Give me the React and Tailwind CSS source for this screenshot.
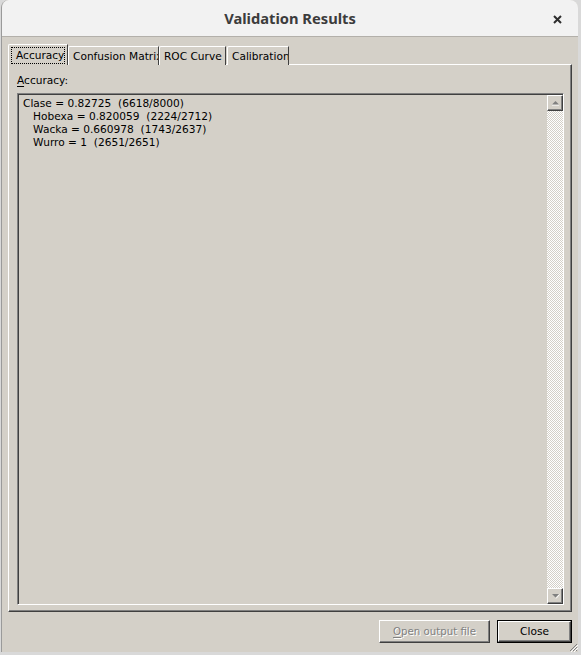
import React from "react"

const ui = { fontFamily: '"DejaVu Sans", Verdana, sans-serif' }

const raised =
  "border border-t-white border-l-white border-r-[#404040] border-b-[#404040] shadow-[inset_-1px_-1px_#808080]"

function Tab({ label, width, selected }) {
  return (
    <div
      className={
        "relative flex overflow-hidden whitespace-nowrap border-t border-l border-r border-t-white border-l-white border-r-[#404040] bg-[#d4d0c8] text-[10.6px] leading-[13px] text-black rounded-tl-[2px] " +
        (selected ? "h-[21px] z-10 pl-[2px] pt-[2px]" : "h-[19px] pl-[4px] pt-[2px]")
      }
      style={{ width }}
    >
      {selected ? (
        <span className="h-[17px] w-[54px] overflow-hidden border border-dotted border-black pl-[4px] pt-[1px]">
          {label}
        </span>
      ) : (
        <span className="pt-[1px]">{label}</span>
      )}
    </div>
  )
}

function ArrowButton({ up }) {
  return (
    <div className={"flex h-[16px] w-[16px] items-center justify-center bg-[#d4d0c8] " + raised}>
      <svg width="9" height="6" viewBox="0 0 9 6">
        {up ? (
          <>
            <path d="M1 5h7" stroke="#ffffff" strokeWidth="1" />
            <path d="M1 4.5h7L4.5 1z" fill="#808080" />
          </>
        ) : (
          <>
            <path d="M5 5.5l3.5-4" stroke="#ffffff" strokeWidth="1" />
            <path d="M1 1h7L4.5 4.5z" fill="#808080" />
          </>
        )}
      </svg>
    </div>
  )
}

const lines = [
  "Clase = 0.82725  (6618/8000)",
  "   Hobexa = 0.820059  (2224/2712)",
  "   Wacka = 0.660978  (1743/2637)",
  "   Wurro = 1  (2651/2651)",
]

export default function App() {
  return (
    <div className="h-[655px] w-[581px] overflow-hidden bg-[#d9d9d9]" style={ui}>
      <div className="ml-[1px] flex h-[652px] w-[577px] flex-col overflow-hidden rounded-t-[8px] border-l border-[#9a9a9a] bg-[#d4d0c8]">
        {/* title bar */}
        <div className="relative flex h-[37px] shrink-0 items-center justify-center border-b border-[#b3b0aa] bg-[#f2f2f2]">
          <span
            className="text-[14.7px] font-bold text-[#3c3c3c]"
            style={{ fontFamily: '"Noto Sans", "Open Sans", sans-serif' }}
          >
            Validation Results
          </span>
          <svg className="absolute right-[16px] top-[15px]" width="9" height="9" viewBox="0 0 9 9">
            <path d="M1 1l7 7M8 1l-7 7" stroke="#2e2e2e" strokeWidth="2" />
          </svg>
        </div>

        {/* body */}
        <div className="flex flex-1 flex-col px-[6px] pt-[7px]">
          <div className="flex h-[21px] items-end">
            <Tab label="Accuracy" width={60} selected />
            <Tab label="Confusion Matrix" width={91} />
            <Tab label="ROC Curve" width={67} />
            <div className="w-[1px]" />
            <Tab label="Calibration" width={62} />
          </div>

          <div className="-mt-[1px] flex h-[548px] flex-col border border-t-white border-l-white border-r-[#404040] border-b-[#404040] pl-[8px] pr-[7px] pt-[9px] pb-[6px] shadow-[inset_-1px_-1px_#808080]">
            <div className="text-[10.6px] leading-[13px] text-black">
              <span className="underline underline-offset-2">A</span>ccuracy:
            </div>
            <div className="mt-[6px] flex flex-1 border border-t-[#808080] border-l-[#808080] border-r-white border-b-white bg-[#d4d0c8] shadow-[inset_1px_1px_#404040]">
              <div className="flex-1 whitespace-pre pl-[5px] pt-[3px] text-[10.6px] leading-[13px] text-black">
                {lines.map((l) => (
                  <div key={l}>{l}</div>
                ))}
              </div>
              <div className="mt-[1px] flex w-[16px] flex-col bg-[conic-gradient(#ffffff_25%,#d4d0c8_0_50%,#ffffff_0_75%,#d4d0c8_0)] bg-[length:2px_2px]">
                <ArrowButton up />
                <div className="flex-1" />
                <ArrowButton />
              </div>
            </div>
          </div>

          <div className="relative flex flex-1 items-start justify-end gap-[7px] pt-[8px]">
            <div
              className={"flex h-[23px] w-[111px] items-center justify-center bg-[#d4d0c8] text-[10.2px] text-[#808080] [text-shadow:1px_1px_0_#ffffff] " + raised}
            >
              <span className="underline underline-offset-2">O</span>pen output file
            </div>
            <div className="h-[23px] w-[75px] border border-black">
              <div
                className={"flex h-full w-full items-center justify-center bg-[#d4d0c8] text-[10.6px] text-black " + raised}
              >
                Close
              </div>
            </div>
            <svg className="absolute -right-[6px] bottom-0" width="9" height="9" viewBox="0 0 9 9">
              <path d="M8 1L1 8M8 4L4 8M8 7L7 8" stroke="#808080" strokeWidth="1" />
              <path d="M9 2L2 9M9 5L5 9" stroke="#ffffff" strokeWidth="1" />
            </svg>
          </div>
        </div>
      </div>
    </div>
  )
}
